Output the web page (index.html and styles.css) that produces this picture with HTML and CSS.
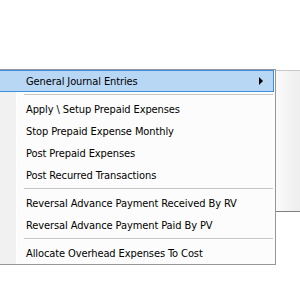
FILE: index.html
```html
<!DOCTYPE html>
<html>
<head>
<meta charset="utf-8">
<link rel="stylesheet" href="styles.css">
</head>
<body>
<div class="stage">
  <div class="menu">
    <div class="item active"><span class="label">General Journal Entries</span><span class="arrow"></span></div>
    <div class="sep"></div>
    <div class="item"><span class="label">Apply \ Setup Prepaid Expenses</span></div>
    <div class="item"><span class="label">Stop Prepaid Expense Monthly</span></div>
    <div class="item"><span class="label">Post Prepaid Expenses</span></div>
    <div class="item"><span class="label">Post Recurred Transactions</span></div>
    <div class="sep"></div>
    <div class="item"><span class="label">Reversal Advance Payment Received By RV</span></div>
    <div class="item"><span class="label">Reversal Advance Payment Paid By PV</span></div>
    <div class="sep"></div>
    <div class="item"><span class="label">Allocate Overhead Expenses To Cost</span></div>
  </div>
  <div class="panel"></div>
</div>
</body>
</html>
```
FILE: styles.css
```css
html, body {
  margin: 0;
  padding: 0;
  background: #ffffff;
}
.stage {
  display: flex;
  align-items: flex-start;
  padding-top: 69px;
}
.menu {
  width: 275px;
  border-top: 1px solid #979797;
  border-right: 1px solid #979797;
  border-bottom: 1px solid #979797;
  background: linear-gradient(to right, #f1f1f1 0, #f1f1f1 16px, #ffffff 16px, #ffffff 17px, #fcfcfc 17px);
  font-family: "DejaVu Sans Condensed", "Liberation Sans", sans-serif;
  font-stretch: condensed;
  font-size: 11px;
  letter-spacing: -0.1px;
  color: #000;
  flex: none;
}
.item {
  height: 22px;
  display: flex;
  align-items: center;
  padding-left: 26px;
  padding-right: 10px;
  box-sizing: border-box;
  margin-right: 1px;
}
.item.active {
  background: #b8d7f4;
  border-top: 1px solid #3b8fe0;
  border-bottom: 1px solid #3b8fe0;
  border-right: 1px solid #3b8fe0;
}
.label {
  flex: 1;
  white-space: nowrap;
}
.arrow {
  width: 0;
  height: 0;
  border-top: 4px solid transparent;
  border-bottom: 4px solid transparent;
  border-left: 4px solid #000;
}
.sep {
  height: 6px;
  margin-left: 24px;
  margin-right: 2px;
  box-sizing: border-box;
  padding-top: 2px;
}
.sep::before {
  content: "";
  display: block;
  height: 1px;
  background: #c5c5c5;
  border-bottom: 1px solid #ffffff;
}
.panel {
  flex: 1;
  margin-top: 1px;
  height: 140px;
  border-top: 1px solid #c8c8c8;
  border-bottom: 1px solid #808080;
  background: linear-gradient(to right, #fafafa, #eeeeee);
}
```
